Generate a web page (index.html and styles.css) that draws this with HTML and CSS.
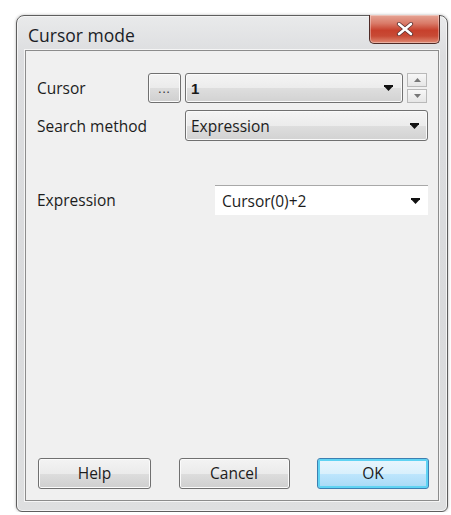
FILE: index.html
```html
<!DOCTYPE html>
<html>
<head>
<meta charset="utf-8">
<title>Cursor mode</title>
<link rel="stylesheet" href="styles.css">
</head>
<body>
<div class="window">
  <div class="titlebar">
    <span class="title">Cursor mode</span>
    <div class="close">
      <svg width="18" height="14" viewBox="0 0 18 14"><path d="M3 2 L15 12 M15 2 L3 12" stroke="#5a3030" stroke-width="4.2" stroke-linecap="round"/><path d="M3 2 L15 12 M15 2 L3 12" stroke="#fff" stroke-width="2.6" stroke-linecap="round"/></svg>
    </div>
  </div>
  <div class="client">
    <div class="row row-cursor">
      <span class="label">Cursor</span>
      <button class="dots">...</button>
      <div class="combo combo-cursor">
        <span class="value">1</span>
        <svg class="arrow" width="9" height="6" viewBox="0 0 9 6"><path d="M0 0 H9 V1.3 L4.5 6 L0 1.3 Z" fill="#111"/></svg>
      </div>
      <div class="spin">
        <div class="spin-btn"><svg width="7" height="4" viewBox="0 0 7 4"><path d="M0 4 L3.5 0 L7 4 Z" fill="#777"/></svg></div>
        <div class="spin-btn"><svg width="7" height="4" viewBox="0 0 7 4"><path d="M0 0 L3.5 4 L7 0 Z" fill="#777"/></svg></div>
      </div>
    </div>
    <div class="row row-method">
      <span class="label">Search method</span>
      <div class="combo combo-method">
        <span class="value">Expression</span>
        <svg class="arrow" width="9" height="6" viewBox="0 0 9 6"><path d="M0 0 H9 V1.3 L4.5 6 L0 1.3 Z" fill="#111"/></svg>
      </div>
    </div>
    <div class="row row-expr">
      <span class="label">Expression</span>
      <div class="combo-flat">
        <span class="value">Cursor(0)+2</span>
        <svg class="arrow" width="9" height="6" viewBox="0 0 9 6"><path d="M0 0 H9 V1.3 L4.5 6 L0 1.3 Z" fill="#111"/></svg>
      </div>
    </div>
    <div class="buttons">
      <button class="btn btn-help">Help</button>
      <button class="btn btn-cancel">Cancel</button>
      <button class="btn btn-ok">OK</button>
    </div>
  </div>
</div>
</body>
</html>
```

FILE: styles.css
```css
html, body {
  margin: 0;
  padding: 0;
  background: #ffffff;
}

body {
  font-family: "Open Sans", "Noto Sans", sans-serif;
  font-size: 15.5px;
  color: #1c1c1c;
}

/* outer glass frame */
.window {
  box-sizing: border-box;
  margin: 15px 0 0 16px;
  width: 432px;
  height: 497px;
  border: 1px solid #5e5e5e;
  border-radius: 8px 8px 6px 6px;
  background: linear-gradient(180deg, #e9eaeb 0%, #dcdddf 8%, #d9dadc 60%, #dedfe0 100%);
  box-shadow: inset 0 0 0 1px #f4f4f4, 0 0 3px rgba(0,0,0,0.3);
  padding: 0 8px 10px 8px;
  display: flex;
  flex-direction: column;
}

.titlebar {
  height: 34px;
  display: flex;
  align-items: flex-start;
  justify-content: space-between;
  flex: none;
}

.title {
  margin: 7px 0 0 3px;
  font-size: 17.5px;
  color: #1a1d26;
}

.close {
  box-sizing: border-box;
  width: 71px;
  height: 29px;
  margin-top: -1px;
  margin-right: -1px;
  border: 1px solid #4e2b27;
  border-top: none;
  border-radius: 0 0 5px 5px;
  background: linear-gradient(180deg, #e6a596 0%, #d97a68 30%, #c7402c 55%, #c84a35 75%, #e08a73 100%);
  box-shadow: inset 0 0 0 1px rgba(255,255,255,0.35);
  display: flex;
  align-items: center;
  justify-content: center;
}

/* client area */
.client {
  flex: 1;
  box-sizing: border-box;
  border: 1px solid #8c8c8c;
  box-shadow: 0 0 0 1px #f5f5f5;
  background: #f0f0f0;
  padding: 22px 9px 11px 11px;
  display: flex;
  flex-direction: column;
}

.row {
  display: flex;
  align-items: center;
}

.label {
  flex: none;
}

.row-cursor {
  height: 30px;
}

.row-cursor .label {
  width: 111px;
}

.dots {
  box-sizing: border-box;
  width: 33px;
  height: 30px;
  padding: 0 0 5px;
  border: 1px solid #707070;
  border-radius: 3px;
  background: linear-gradient(180deg, #f3f3f3 0%, #ebebeb 50%, #dddddd 51%, #cfcfcf 100%);
  box-shadow: inset 0 0 0 1px #fbfbfb;
  font-family: inherit;
  font-size: 12px;
  color: #333;
  display: flex;
  align-items: flex-end;
  justify-content: center;
  letter-spacing: 1px;
}

.combo {
  box-sizing: border-box;
  border: 1px solid #707070;
  border-radius: 3px;
  background: linear-gradient(180deg, #f4f4f4 0%, #ececec 50%, #dedede 51%, #d2d2d2 100%);
  box-shadow: inset 0 0 0 1px #fafafa;
  display: flex;
  align-items: center;
  justify-content: space-between;
  padding: 0 9px 0 5px;
}

.combo-cursor {
  width: 218px;
  height: 30px;
  margin-left: 4px;
}

.combo-cursor .value {
  font-weight: bold;
  font-family: "Liberation Sans", sans-serif;
  font-size: 15px;
  color: #1a1a1a;
}

.spin {
  margin-left: 4px;
  width: 20px;
  height: 30px;
  display: flex;
  flex-direction: column;
  gap: 2px;
}

.spin-btn {
  box-sizing: border-box;
  flex: 1;
  border: 1px solid #b9b9b9;
  background: linear-gradient(180deg, #f7f7f7, #e6e6e6);
  display: flex;
  align-items: center;
  justify-content: center;
}

.row-method {
  height: 31px;
  margin-top: 7px;
}

.row-method .label {
  width: 148px;
}

.combo-method {
  width: 243px;
  height: 31px;
  padding-right: 8px;
}

.row-expr {
  height: 30px;
  margin-top: 44px;
}

.row-expr .label {
  width: 178px;
}

.combo-flat {
  box-sizing: border-box;
  width: 213px;
  height: 30px;
  background: #ffffff;
  border-top: 1px solid #a8a8a8;
  display: flex;
  align-items: center;
  justify-content: space-between;
  padding: 0 8px 0 7px;
}

.buttons {
  margin-top: auto;
  display: flex;
  justify-content: space-between;
  padding-left: 1px;
}

.btn {
  box-sizing: border-box;
  height: 31px;
  border: 1px solid #707070;
  border-radius: 3px;
  background: linear-gradient(180deg, #f3f3f3 0%, #ebebeb 50%, #dddddd 51%, #cfcfcf 100%);
  box-shadow: inset 0 0 0 1px #fbfbfb;
  font-family: inherit;
  font-size: 15.5px;
  color: #1c1c1c;
  padding: 0 0 2px;
}

.btn-help {
  width: 113px;
}

.btn-cancel {
  width: 111px;
}

.btn-ok {
  width: 112px;
  border-color: #3c7fb1;
  background: linear-gradient(180deg, #eaf6fd 0%, #d9f0fc 50%, #bee6fd 51%, #a7d9f5 100%);
  box-shadow: inset 0 0 0 2px #5fd3f3;
}
```
